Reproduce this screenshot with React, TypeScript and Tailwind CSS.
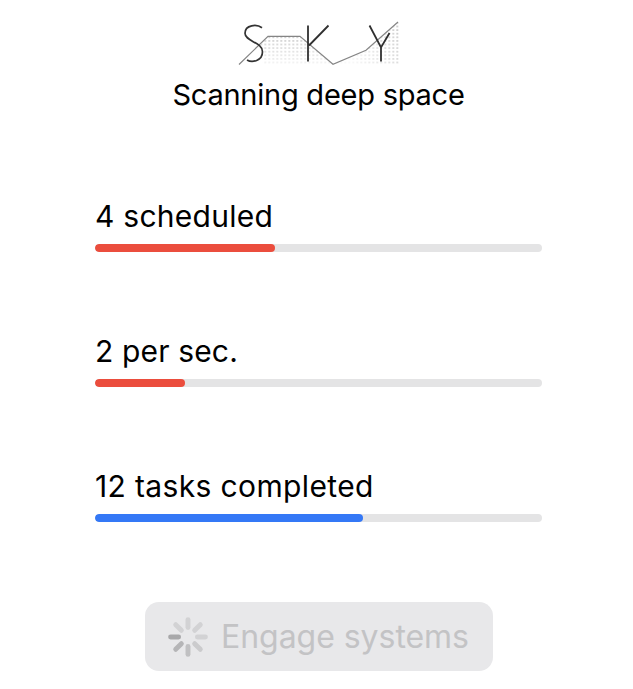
import React from "react";

function Logo() {
  return (
    <svg className="block h-[50px] w-[170px]" viewBox="234 18 170 50" fill="none">
      <defs>
        <pattern id="dots" x="267.3" y="35.5" width="4" height="3.6" patternUnits="userSpaceOnUse">
          <rect x="1.1" y="1" width="1.8" height="1.6" fill="#c6c6c6" />
        </pattern>
        <linearGradient id="down" x1="0" y1="36" x2="0" y2="64" gradientUnits="userSpaceOnUse">
          <stop offset="0" stopColor="#fff" />
          <stop offset="1" stopColor="#fff" stopOpacity="0.25" />
        </linearGradient>
        <linearGradient id="across" x1="398" y1="30" x2="350" y2="60" gradientUnits="userSpaceOnUse">
          <stop offset="0" stopColor="#fff" />
          <stop offset="1" stopColor="#fff" stopOpacity="0.15" />
        </linearGradient>
        <mask id="softLeft" maskUnits="userSpaceOnUse" x="234" y="18" width="170" height="50">
          <rect x="234" y="18" width="170" height="50" fill="url(#down)" />
        </mask>
        <mask id="softRight" maskUnits="userSpaceOnUse" x="234" y="18" width="170" height="50">
          <rect x="234" y="18" width="170" height="50" fill="url(#across)" />
        </mask>
      </defs>
      <path d="M261 44L268 36.5H300L333 64H263Z" fill="url(#dots)" mask="url(#softLeft)" />
      <path d="M333 64L366 51L399 22V64H333Z" fill="url(#dots)" mask="url(#softRight)" />
      <path d="M239 64.5L268 36.3H300L333 64.3L366 50.3L398 22" stroke="#858585" strokeWidth="1.2" />
      <path d="M262 27.8C257 24 245 24.5 245 33.3C245 41.5 262.5 42 262.5 51.8C262.5 61 252 63 247 60" stroke="#333" strokeWidth="1.7" />
      <path d="M308 25.5V61.5M328.5 25.5L309 45.5M369.5 25.5L381 47.5L389.5 33M381 47V61.5" stroke="#303030" strokeWidth="1.8" />
    </svg>
  );
}

const rows = [
  { label: "4 scheduled", value: 179.5, color: "bg-[#eb4d3d]", text: "tracking-[0.25px]" },
  { label: "2 per sec.", value: 90, color: "bg-[#eb4d3d]", text: "tracking-[0.15px]" },
  { label: "12 tasks completed", value: 267.5, color: "bg-[#3478f6]", text: "tracking-[0.36px]" },
];

const spokes = ["#d2d2d4", "#d2d2d4", "#d2d2d4", "#cbcbcd", "#c0c0c2", "#b5b5b7", "#a8a8aa", "#d2d2d4"];

function Spinner() {
  return (
    <svg className="size-10 shrink-0" viewBox="-20 -20 40 40">
      {spokes.map((color, i) => (
        <line key={i} x1="0" y1="-17.4" x2="0" y2="-9.4" stroke={color} strokeWidth="4.9" strokeLinecap="round" transform={`rotate(${i * 45})`} />
      ))}
    </svg>
  );
}

export default function App() {
  return (
    <main className="flex h-[689px] w-[633px] flex-col items-center overflow-hidden bg-white pt-[18px] pl-[4px] font-['Inter','Liberation_Sans',sans-serif] text-black">
      <Logo />
      <h1 className="mt-[7px] h-10 text-[29px] leading-10 tracking-[-0.24px] whitespace-nowrap">Scanning deep space</h1>
      <section className="mt-[81px] flex w-[447px] flex-col gap-[79px]">
        {rows.map((row) => (
          <div key={row.label} className="flex h-14 flex-col justify-between">
            <p className={`text-[30px] leading-10 whitespace-nowrap ${row.text}`}>{row.label}</p>
            <div className="h-2 w-full overflow-hidden rounded-full bg-[#e4e4e5]">
              <div className={`h-full rounded-full ${row.color}`} style={{ width: row.value }} />
            </div>
          </div>
        ))}
      </section>
      <button disabled className="mt-20 flex h-[69px] w-[348px] items-center gap-[13px] rounded-[14px] bg-[#e8e8ea] pl-[23.5px] text-[32px] tracking-[-0.04px] whitespace-nowrap text-[#c3c3c5]">
        <Spinner />
        <span>Engage systems</span>
      </button>
    </main>
  );
}
